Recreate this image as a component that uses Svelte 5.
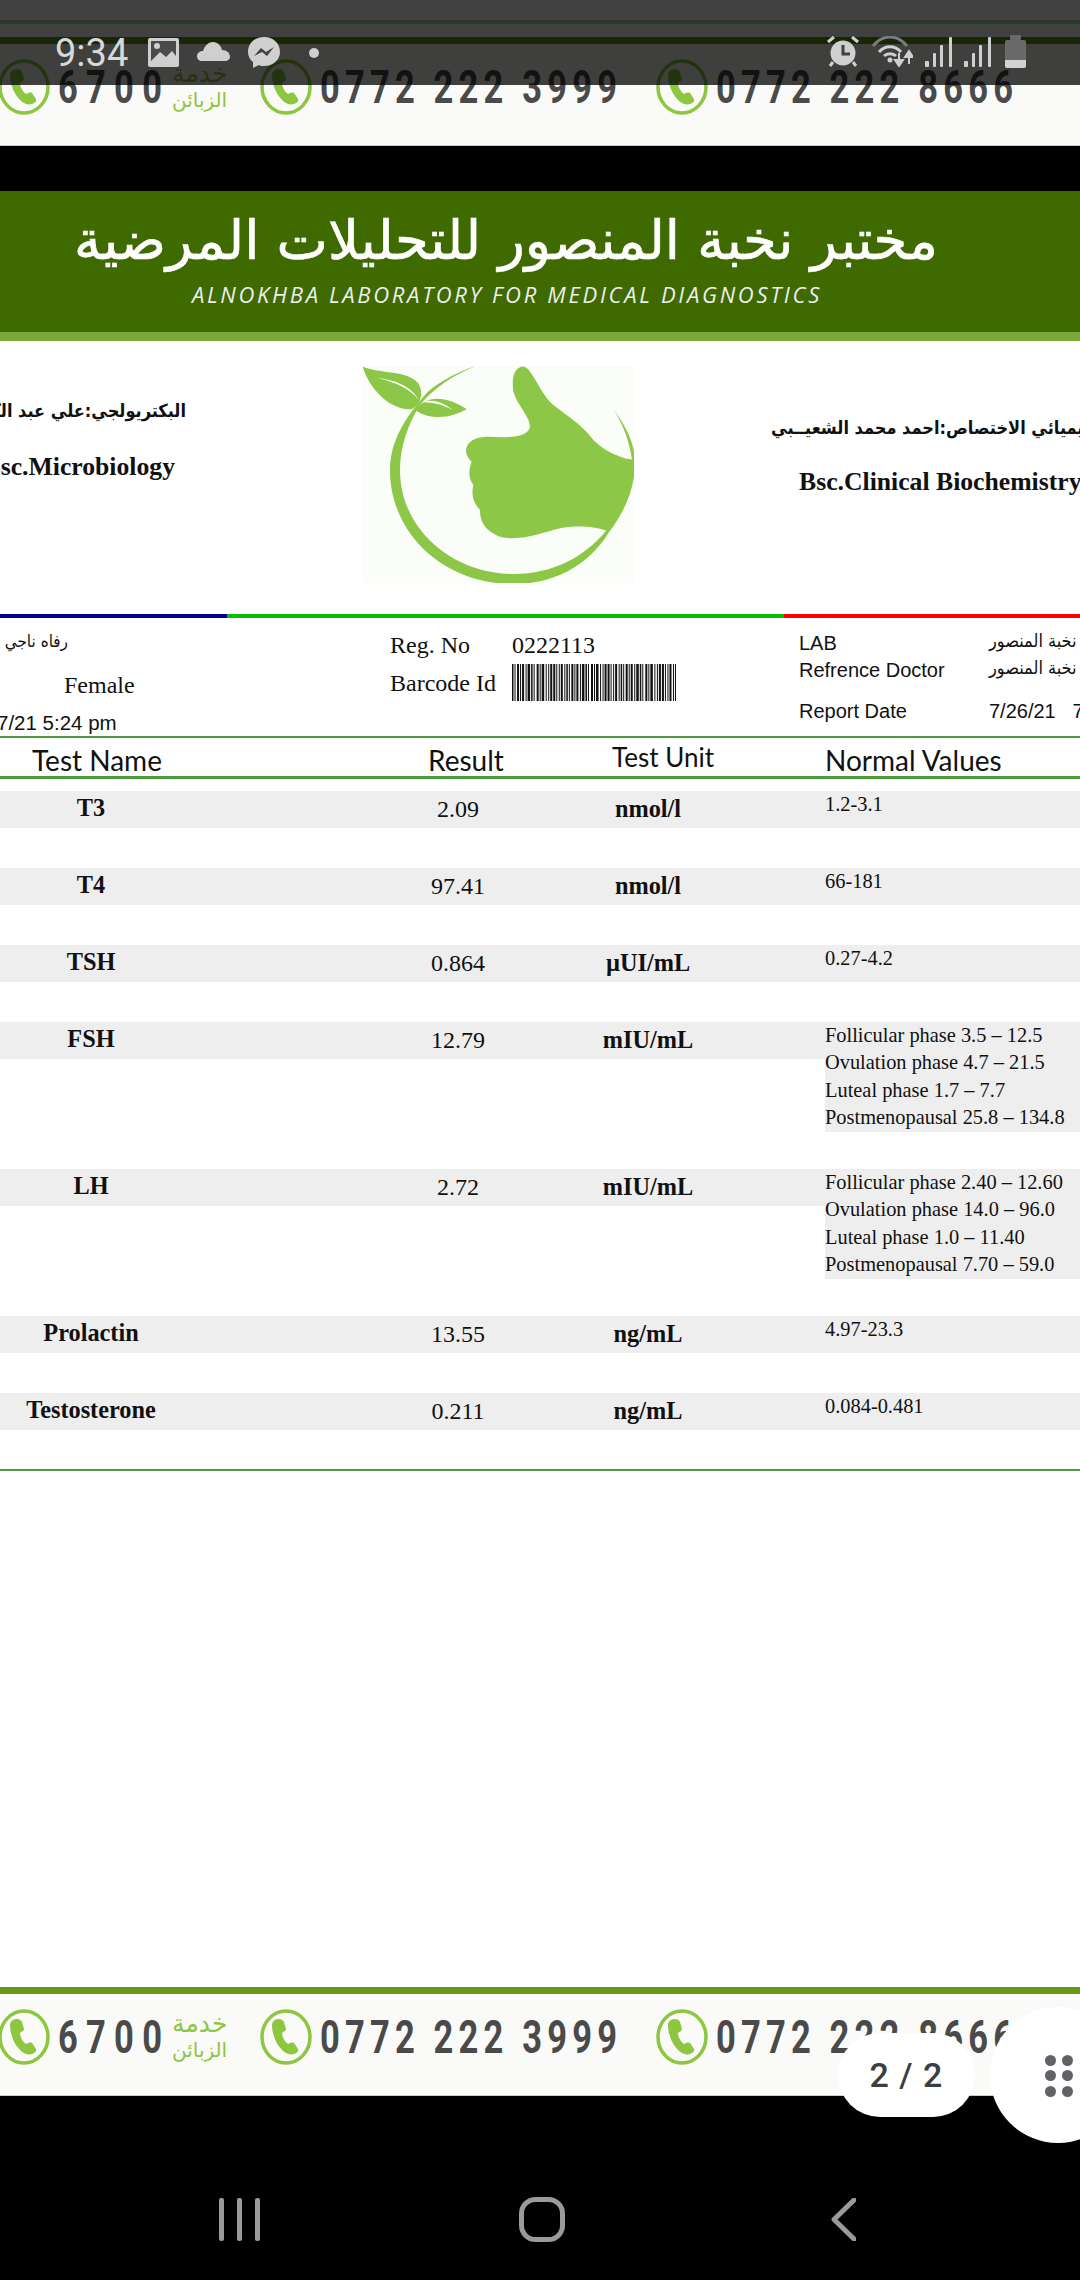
<script>
  const rows = [
    { name: 'T3', result: '2.09', unit: 'nmol/l', normal: ['1.2-3.1'] },
    { name: 'T4', result: '97.41', unit: 'nmol/l', normal: ['66-181'] },
    { name: 'TSH', result: '0.864', unit: 'µUI/mL', normal: ['0.27-4.2'] },
    { name: 'FSH', result: '12.79', unit: 'mIU/mL', normal: ['Follicular phase 3.5 – 12.5', 'Ovulation phase 4.7 – 21.5', 'Luteal phase 1.7 – 7.7', 'Postmenopausal 25.8 – 134.8'] },
    { name: 'LH', result: '2.72', unit: 'mIU/mL', normal: ['Follicular phase 2.40 – 12.60', 'Ovulation phase 14.0 – 96.0', 'Luteal phase 1.0 – 11.40', 'Postmenopausal 7.70 – 59.0'] },
    { name: 'Prolactin', result: '13.55', unit: 'ng/mL', normal: ['4.97-23.3'] },
    { name: 'Testosterone', result: '0.211', unit: 'ng/mL', normal: ['0.084-0.481'] }
  ];

  // bar widths of the barcode, alternating black / white
  const pattern = [1.5, 1, 1, 1.5, 2, 1, 1, 1, 2, 1.5, 1, 1, 2.5, 1, 1.5, 1, 1, 2, 2, 1, 1, 1, 2.5, 1.5, 1, 1.5, 1, 1, 2, 1, 2, 1, 1, 1.5, 1, 1, 2, 1.5, 1, 1];
  let bars = [];
  let cursor = 0;
  while (cursor < 163) {
    pattern.forEach((w, i) => {
      if (i % 2 === 0 && cursor < 163) bars.push({ x: cursor, w });
      cursor += w;
    });
  }
</script>

{#snippet phone()}
  <svg class="phone" viewBox="0 0 52 56">
    <ellipse cx="26" cy="28" rx="24" ry="26" fill="none" stroke="#8dc63f" stroke-width="3.5" />
    <path d="M15 11 C18 9 23 10 24 13 L26 20 C26 22 23 23 22 24 C22 28 25 33 28 35 C30 34 32 33 34 34 L38 40 C39 42 37 44 34 45 C28 47 22 42 18 36 C14 30 12 22 12 16 C12 14 13 12 15 11 Z" fill="#8dc63f" />
  </svg>
{/snippet}

{#snippet contacts()}
  <div class="contacts">
    {@render phone()}
    <span class="num first"><i>6700</i></span>
    <span class="service"><b>خدمة</b><b class="small">الزبائن</b></span>
    {@render phone()}
    <span class="num"><i>0772 222 3999</i></span>
    {@render phone()}
    <span class="num"><i>0772 222 8666</i></span>
  </div>
{/snippet}

<div class="page">
  <div class="sheet-top">
    <div class="faint"></div>
  </div>
  <div class="strip"></div>
  {@render contacts()}
  <div class="gap"></div>

  <header class="lab">
    <h1>مختبر نخبة المنصور للتحليلات المرضية</h1>
    <p>ALNOKHBA LABORATORY FOR MEDICAL DIAGNOSTICS</p>
  </header>

  <section class="doctors">
    <div class="doc left">
      <div class="ar">البكتريولجي:علي عبد الكريم</div>
      <div class="en">Bsc.Microbiology</div>
    </div>
    <svg class="logo" viewBox="69 48 813 651">
      <rect x="69" y="48" width="813" height="651" fill="#fbfdf9" />
      <path d="M410 47 C340 70 280 105 250 140 C200 200 150 270 150 360 C150 550 310 702 520 702 C650 702 750 640 808 545 L800 540 C735 620 640 672 520 672 C340 672 180 540 180 360 C180 290 205 220 240 165 C280 115 340 75 410 47 Z" fill="#8cc747" />
      <path d="M545 50 C520 55 515 90 520 125 C535 170 570 200 570 230 C565 255 530 262 480 262 C440 258 395 258 380 290 C375 310 380 320 395 335 C385 360 385 385 400 405 C395 430 395 450 420 480 C420 510 430 540 480 560 C540 575 600 550 660 535 C710 525 770 530 808 545 C850 490 885 420 885 340 L878 328 C860 330 800 310 760 270 C730 230 700 210 640 165 C610 140 590 90 570 65 C560 52 553 48 545 50 Z" fill="#8cc747" />
      <path d="M822 180 C855 225 885 280 885 335 L876 330 C870 280 850 225 822 180 Z" fill="#8cc747" />
      <path d="M68 50 C120 72 200 60 235 100 C250 125 243 150 232 165 L215 178 C150 180 90 120 68 50 Z" fill="#8cc747" />
      <path d="M115 85 C165 90 215 110 236 150 C210 115 165 97 115 85 Z" fill="#fff" />
      <path d="M228 182 C250 135 320 135 380 178 C340 200 280 215 228 182 Z" fill="#8cc747" />
      <path d="M245 157 C280 145 310 158 338 180 C310 165 280 156 245 157 Z" fill="#fff" />
    </svg>
    <div class="doc right">
      <div class="ar">كيميائي الاختصاص:احمد محمد الشعيــبي</div>
      <div class="en">Bsc.Clinical Biochemistry</div>
    </div>
  </section>

  <div class="tricolor">
    <span class="blue"></span><span class="green"></span><span class="red"></span>
  </div>

  <section class="info">
    <div class="col patient">
      <div class="name-ar">رفاه ناجي</div>
      <div class="gender">Female</div>
      <div class="date">7/21 5:24 pm</div>
    </div>
    <div class="col reg">
      <div class="pair first-pair"><span>Reg. No</span><span>0222113</span></div>
      <div class="pair">
        <span>Barcode Id</span>
        <svg class="barcode" viewBox="0 0 163 37" preserveAspectRatio="none">
          {#each bars as bar}
            <rect x={bar.x} y="0" width={bar.w} height="37" fill="#111" />
          {/each}
        </svg>
      </div>
    </div>
    <div class="col meta">
      <div class="meta-row r1"><span class="k">LAB</span><span class="v ar-small">نخبة المنصور</span></div>
      <div class="meta-row r2"><span class="k">Refrence Doctor</span><span class="v ar-small">نخبة المنصور</span></div>
      <div class="meta-row r3"><span class="k">Report Date</span><span class="v">7/26/21 &nbsp; 7:30 pm</span></div>
    </div>
  </section>

  <section class="table">
    <div class="thead">
      <span>Test Name</span>
      <span>Result</span>
      <span class="up">Test Unit</span>
      <span>Normal Values</span>
    </div>
    <div class="tbody">
      {#each rows as row}
        <div class="row" class:multi={row.normal.length > 1}>
          <div class="band">
            <span class="t-name">{row.name}</span>
            <span class="t-result">{row.result}</span>
            <span class="t-unit">{row.unit}</span>
          </div>
          <div class="normal">
            {#each row.normal as line}
              <div>{line}</div>
            {/each}
          </div>
        </div>
      {/each}
    </div>
  </section>

  <div class="sheet-bottom"></div>
  <div class="strip"></div>
  {@render contacts()}
  <div class="black"></div>

  <!-- status bar lies over the page -->
  <div class="status">
    <span class="time">9:34</span>
    <svg class="s-img" viewBox="0 0 31 29">
      <rect width="31" height="29" rx="2" fill="#cfcfcf" />
      <rect x="3" y="3" width="25" height="20" fill="#4a4a4a" />
      <circle cx="9" cy="8" r="3" fill="#cfcfcf" />
      <path d="M3 23 L12 14 L18 19 L24 13 L28 18 L28 23 Z" fill="#cfcfcf" />
    </svg>
    <svg class="s-cloud" viewBox="0 0 33 19">
      <path d="M5 19 C2 19 0 17 0 14 C0 11 3 9 6 9 C8 3 12 0 16 0 C21 0 24 4 25 8 C30 8 33 11 33 15 C33 17 31 19 28 19 Z" fill="#cfcfcf" />
    </svg>
    <svg class="s-msg" viewBox="0 0 32 31">
      <path d="M16 0 C7 0 0 6 0 15 C0 19 2 23 5 25 L5 31 L11 28 C12 29 14 29 16 29 C25 29 32 23 32 15 C32 6 25 0 16 0 Z" fill="#cfcfcf" />
      <path d="M6 19 L13 11 L18 15 L26 10 L19 19 L14 15 Z" fill="#404040" />
    </svg>
    <span class="s-dot"></span>

    <svg class="s-alarm" viewBox="0 0 32 31">
      <path d="M1 6 L7 1 M31 6 L25 1" stroke="#cfcfcf" stroke-width="3" />
      <circle cx="16" cy="17" r="12.5" fill="#cfcfcf" />
      <path d="M16 9 V18 H23" stroke="#404040" stroke-width="3" fill="none" />
      <path d="M6 26 L3 30 M26 26 L29 30" stroke="#cfcfcf" stroke-width="3" />
    </svg>
    <svg class="s-wifi" viewBox="0 0 41 31">
      <path d="M1 10 C11 -2 25 -2 35 10" stroke="#7b7b7b" stroke-width="3" fill="none" />
      <path d="M7 16 C13 9 23 9 29 16" stroke="#cfcfcf" stroke-width="3" fill="none" />
      <path d="M12 20 C15 17 21 17 24 20" stroke="#cfcfcf" stroke-width="3" fill="none" />
      <circle cx="18" cy="24" r="2.5" fill="#cfcfcf" />
      <path d="M27 17 V27 M23 24 L27 30 L31 24 Z" stroke="#cfcfcf" stroke-width="2" fill="#cfcfcf" />
      <path d="M37 28 V18 M33 21 L37 15 L41 21 Z" stroke="#cfcfcf" stroke-width="2" fill="#cfcfcf" />
    </svg>
    <svg class="s-sig one" viewBox="0 0 27 30">
      <rect x="0" y="24" width="4" height="6" rx="1" fill="#cfcfcf" />
      <rect x="8" y="16" width="3" height="14" rx="1" fill="#cfcfcf" />
      <rect x="15" y="8" width="3" height="22" rx="1" fill="#cfcfcf" />
      <rect x="24" y="0" width="3" height="30" rx="1" fill="#cfcfcf" />
    </svg>
    <svg class="s-sig" viewBox="0 0 27 30">
      <rect x="0" y="24" width="4" height="6" rx="1" fill="#cfcfcf" />
      <rect x="8" y="16" width="3" height="14" rx="1" fill="#cfcfcf" />
      <rect x="15" y="8" width="3" height="22" rx="1" fill="#cfcfcf" />
      <rect x="24" y="0" width="3" height="30" rx="1" fill="#cfcfcf" />
    </svg>
    <svg class="s-batt" viewBox="0 0 21 33">
      <rect x="5" y="0" width="11" height="5" rx="1" fill="#6a6a6a" />
      <rect x="0" y="5" width="21" height="28" rx="2" fill="#6a6a6a" />
      <path d="M0 25 H21 V31 Q21 33 19 33 H2 Q0 33 0 31 Z" fill="#d2d2d2" />
    </svg>
  </div>

  <div class="pager">2 / 2</div>
  <div class="grip">
    <div class="dots">
      {#each Array(6) as _}
        <span></span>
      {/each}
    </div>
  </div>

  <nav class="softkeys">
    <svg viewBox="0 0 41 43" class="k-recent">
      <rect x="0" y="0" width="5" height="43" rx="2" fill="#9a9a9a" />
      <rect x="18" y="0" width="5" height="43" rx="2" fill="#9a9a9a" />
      <rect x="36" y="0" width="5" height="43" rx="2" fill="#9a9a9a" />
    </svg>
    <svg viewBox="0 0 46 45" class="k-home">
      <rect x="2.5" y="2.5" width="41" height="40" rx="14" fill="none" stroke="#9a9a9a" stroke-width="5" />
    </svg>
    <svg viewBox="0 0 25 43" class="k-back">
      <path d="M23 2 L3 21.5 L23 41" fill="none" stroke="#9a9a9a" stroke-width="5" stroke-linecap="round" stroke-linejoin="round" />
    </svg>
  </nav>
</div>

<style>
  :global(body) {
    margin: 0;
    background: #000;
  }

  .page {
    position: relative;
    width: 1080px;
    height: 2280px;
    overflow: hidden;
    background: #000;
    display: flex;
    flex-direction: column;
    font-family: "Liberation Serif", serif;
    color: #111;
  }

  .sheet-top {
    height: 37px;
    background: #fff;
    padding-top: 20px;
    box-sizing: border-box;
  }

  .faint {
    height: 4px;
    background: #a8e8a8;
  }

  .strip {
    height: 7px;
    background: #66981a;
    flex: none;
  }

  .contacts {
    height: 102px;
    flex: none;
    box-sizing: border-box;
    background: #fafaf8;
    border-bottom: 1px solid #ccc;
    display: flex;
    align-items: flex-start;
    padding-top: 15px;
    overflow: hidden;
    font-family: Roboto, sans-serif;
  }

  .phone {
    width: 52px;
    height: 56px;
    flex: none;
  }

  .phone:first-child {
    margin-left: -2px;
  }

  .num {
    width: 344px;
    flex: none;
    box-sizing: border-box;
    padding-left: 8px;
    color: #4a4a4a;
    line-height: 56px;
    white-space: nowrap;
  }

  /* Roboto squeezed sideways, the reference digits are condensed */
  .num i {
    display: inline-block;
    font-style: normal;
    font-size: 46px;
    font-weight: 700;
    letter-spacing: 6.9px;
    transform: scaleX(0.75);
    transform-origin: left center;
  }

  .num.first {
    width: 122px;
  }

  .num.first i {
    letter-spacing: 11px;
  }

  .service {
    width: 88px;
    flex: none;
    display: flex;
    flex-direction: column;
    font-family: "DejaVu Sans", sans-serif;
    color: #8dc63f;
    padding-top: 2px;
  }

  .service b {
    width: 54px;
    font-weight: 400;
    font-size: 25px;
    line-height: 26px;
    text-align: center;
    white-space: nowrap;
  }

  .service b.small {
    font-size: 20px;
  }

  .gap {
    height: 45px;
    flex: none;
    background: #000;
  }

  .lab {
    height: 150px;
    flex: none;
    box-sizing: border-box;
    background: #3e6a00;
    border-bottom: 9px solid #7aab3a;
    color: #fff;
    text-align: center;
    padding-right: 68px;
  }

  .lab h1 {
    margin: 0;
    padding-top: 14px;
    font-family: "DejaVu Sans", sans-serif;
    font-weight: 400;
    font-size: 54.5px;
    line-height: 70px;
    direction: rtl;
    -webkit-text-stroke: 0.7px #fff;
    white-space: nowrap;
  }

  .lab p {
    margin: 0;
    font-family: "Open Sans", sans-serif;
    font-style: italic;
    font-size: 22px;
    line-height: 26px;
    letter-spacing: 2.7px;
    color: #eee;
    padding-top: 6px;
    padding-left: 2px;
  }

  .doctors {
    height: 273px;
    flex: none;
    background: #fff;
    display: grid;
    grid-template-columns: 363px 271px 1fr;
  }

  .doc {
    overflow: hidden;
    font-weight: 700;
    white-space: nowrap;
    display: flex;
    flex-direction: column;
  }

  .doc.left {
    align-items: flex-end;
    padding-right: 177px;
    padding-top: 56px;
  }

  .doc.right {
    align-items: flex-start;
    padding-left: 137px;
    padding-top: 73px;
  }

  .doc .ar {
    font-family: "DejaVu Sans", sans-serif;
    font-stretch: condensed;
    font-size: 18px;
    line-height: 28px;
    direction: rtl;
  }

  .doc.right .en {
    margin-left: 28px;
    margin-top: 25px;
  }

  .doc.left .en {
    margin-top: 27px;
    margin-right: 11px;
  }

  .doc .en {
    font-size: 25.7px;
    line-height: 30px;
  }

  .logo {
    width: 271px;
    height: 217px;
    margin-top: 25px;
  }

  .tricolor {
    height: 4px;
    flex: none;
    display: grid;
    grid-template-columns: 227px 557px 1fr;
    background: #fff;
  }

  .blue { background: #00008b; }
  .green { background: #00c000; }
  .red { background: #f00; }

  .info {
    height: 120px;
    flex: none;
    box-sizing: border-box;
    background: #fff;
    border-bottom: 2px solid #4e9a3e;
    display: grid;
    grid-template-columns: 390px 409px 1fr;
    overflow: hidden;
  }

  .col {
    min-width: 0;
    overflow: hidden;
  }

  .patient .name-ar {
    width: 68px;
    font-family: "DejaVu Sans", sans-serif;
    font-stretch: condensed;
    font-size: 17px;
    line-height: 20px;
    direction: rtl;
    white-space: nowrap;
    margin-top: 13px;
  }

  .gender {
    margin-left: 64px;
    font-size: 24px;
    line-height: 26px;
    margin-top: 21px;
  }

  .date {
    font-family: "Liberation Sans", sans-serif;
    font-size: 20.5px;
    line-height: 24px;
    margin-top: 13px;
    margin-left: -3px;
    white-space: nowrap;
  }

  .pair {
    display: grid;
    grid-template-columns: 122px 1fr;
    font-size: 24px;
    line-height: 26px;
    align-items: center;
    margin-top: 6px;
  }

  .first-pair {
    margin-top: 14px;
    margin-bottom: 0;
  }

  .barcode {
    display: block;
    width: 164px;
    height: 37px;
  }

  .meta {
    font-family: "Liberation Sans", sans-serif;
    font-size: 20px;
    line-height: 24px;
  }

  .meta-row {
    display: grid;
    grid-template-columns: 190px 200px;
    white-space: nowrap;
    align-items: center;
  }

  .r1 { margin-top: 13px; }
  .r2 { margin-top: 3px; }
  .r3 { margin-top: 17px; }

  .ar-small {
    font-family: "DejaVu Sans", sans-serif;
    font-stretch: condensed;
    font-size: 18px;
    direction: rtl;
    text-align: left;
    margin-top: -5px;
  }

  .table {
    flex: none;
    height: 733px;
    box-sizing: border-box;
    background: #fff;
    border-bottom: 2px solid #4e9a3e;
  }

  .thead {
    height: 41px;
    box-sizing: border-box;
    border-bottom: 3px solid #4e9a3e;
    display: grid;
    grid-template-columns: 428px 184px 213px 1fr;
    font-family: Lato, sans-serif;
    font-size: 28px;
    line-height: 44px;
    color: #111;
  }

  .thead span:first-child {
    padding-left: 32px;
  }

  .thead .up {
    font-size: 26px;
    line-height: 38px;
  }

  .tbody {
    padding-top: 12px;
    display: flex;
    flex-direction: column;
    gap: 40px;
  }

  .row {
    display: grid;
    grid-template-columns: 825px 1fr;
    align-items: start;
  }

  .row.multi {
    margin-bottom: -2.6px;
  }

  .band {
    height: 37px;
    background: #eee;
    display: grid;
    grid-template-columns: 182px 200px 152px 228px 63px;
    align-items: center;
    text-align: center;
  }

  .t-name {
    font-weight: 700;
    font-size: 24.3px;
    line-height: 32px;
    margin-bottom: 4px;
  }

  .t-result {
    grid-column: 3;
    font-size: 24px;
    line-height: 32px;
    margin-bottom: 1px;
  }

  .t-unit {
    grid-column: 4;
    font-weight: 700;
    font-size: 24.3px;
    line-height: 32px;
    margin-bottom: 1px;
  }

  .normal {
    background: #eee;
    min-height: 37px;
    font-size: 20.4px;
    line-height: 27.4px;
  }

  .sheet-bottom {
    flex: none;
    height: 516px;
    background: #fff;
  }

  .black {
    flex: 1;
    background: #000;
  }

  .status {
    position: absolute;
    left: 0;
    top: 0;
    width: 100%;
    height: 85px;
    background: rgba(0, 0, 0, 0.75);
    color: #d8d8d8;
  }

  .status > * {
    position: absolute;
  }

  .time {
    left: 55px;
    top: 31px;
    font-family: Roboto, sans-serif;
    font-size: 38px;
    line-height: 44px;
  }

  .s-img { left: 148px; top: 38px; width: 31px; height: 29px; }
  .s-cloud { left: 197px; top: 42px; width: 33px; height: 19px; }
  .s-msg { left: 248px; top: 37px; width: 32px; height: 31px; }
  .s-dot { left: 309px; top: 48px; width: 10px; height: 10px; border-radius: 50%; background: #cfcfcf; }
  .s-alarm { left: 827px; top: 36px; width: 32px; height: 31px; }
  .s-wifi { left: 872px; top: 36px; width: 41px; height: 31px; }
  .s-sig { left: 964px; top: 37px; width: 27px; height: 30px; }
  .s-sig.one { left: 925px; }
  .s-batt { left: 1005px; top: 35px; width: 21px; height: 33px; }

  .pager {
    position: absolute;
    left: 838px;
    top: 2033px;
    width: 137px;
    height: 84px;
    border-radius: 42px;
    background: #fff;
    font-family: Roboto, sans-serif;
    font-size: 34px;
    font-weight: 500;
    letter-spacing: 1px;
    line-height: 84px;
    text-align: center;
    color: #3a3f44;
  }

  .grip {
    position: absolute;
    left: 990px;
    top: 2007px;
    width: 136px;
    height: 136px;
    border-radius: 50%;
    background: #fff;
  }

  .dots {
    position: absolute;
    left: 54.5px;
    top: 47.5px;
    display: grid;
    grid-template-columns: 11px 11px;
    column-gap: 6.5px;
    row-gap: 4.5px;
  }

  .dots span {
    width: 11px;
    height: 11px;
    border-radius: 50%;
    background: #5f6368;
  }

  .softkeys {
    position: absolute;
    left: 0;
    top: 2197px;
    width: 100%;
    height: 45px;
  }

  .softkeys svg {
    position: absolute;
  }

  .k-recent { left: 219px; top: 1px; width: 41px; height: 43px; }
  .k-home { left: 519px; top: 0; width: 46px; height: 45px; }
  .k-back { left: 831px; top: 1px; width: 25px; height: 43px; }
</style>
